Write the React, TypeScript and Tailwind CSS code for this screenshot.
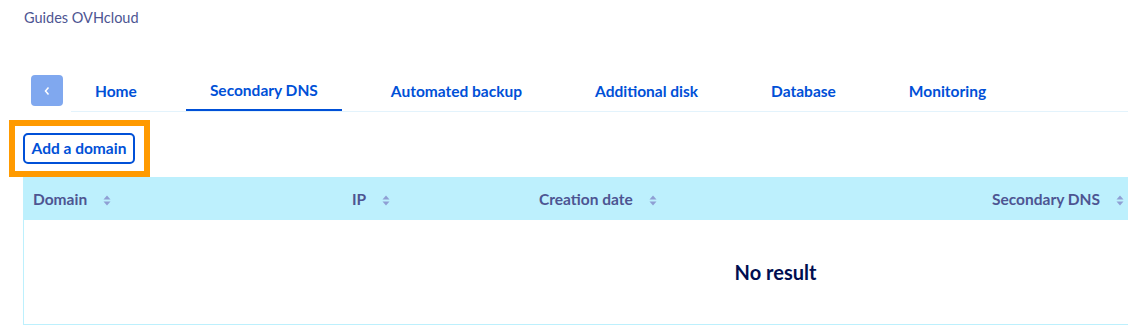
import React from "react";

const tabs = ["Home", "Secondary DNS", "Automated backup", "Additional disk", "Database", "Monitoring"];

function SortIcon() {
  return (
    <svg width="8" height="11" viewBox="0 0 8 11" className="shrink-0">
      <path d="M4 0.5 L7.5 4.5 L0.5 4.5 Z" fill="#8f9fd4" />
      <path d="M4 10.5 L7.5 6.5 L0.5 6.5 Z" fill="#8f9fd4" />
    </svg>
  );
}

export default function App() {
  return (
    <div
      className="w-[1128px] h-[328px] overflow-hidden bg-white"
      style={{ fontFamily: "Lato, 'Noto Sans', sans-serif" }}
    >
      <div className="pl-[24px] pt-[9px] text-[14.5px] leading-[18px] text-[#4d5592]">Guides OVHcloud</div>

      <div className="flex items-end mt-[48px] pl-[31px]">
        <div className="w-[32px] h-[31px] mb-[6px] rounded-[4px] bg-[#80a8ef] flex items-center justify-center">
          <svg width="8" height="10" viewBox="0 0 8 10">
            <path d="M5.5 1.5 L2.5 5 L5.5 8.5" stroke="white" strokeWidth="1.5" fill="none" />
          </svg>
        </div>
        <div className="ml-[8px] flex-1 flex gap-[25px] border-b border-[#e3f3fc] h-[37px]">
          {tabs.map((t) => (
            <div
              key={t}
              className={
                "px-[24px] flex items-center text-[15.5px] font-bold text-[#0050d7] pb-[2px] " +
                (t === "Secondary DNS" ? "border-b-[2px] border-[#0050d7] pb-0" : "")
              }
            >
              {t}
            </div>
          ))}
        </div>
      </div>

      <div className="mt-[8px] ml-[9px] w-[141px] h-[57px] border-[6px] border-[#ff9a00] pl-[8px] pt-[7px]">
        <button className="h-[31px] w-[112px] rounded-[5px] border-[2px] border-[#0050d7] text-[15.5px] font-bold text-[#0050d7] flex items-center justify-center">
          Add a domain
        </button>
      </div>

      <div className="ml-[23px] w-[1505px] border border-t-0 border-[#bdf0fd]">
        <div className="flex h-[43px] bg-[#bdf0fd] items-center pt-[3px] text-[15.5px] font-bold text-[#4d5592]">
          <div className="w-[319px] pl-[9px] flex items-center gap-[16px]">
            Domain <SortIcon />
          </div>
          <div className="w-[187px] pl-[9px] flex items-center gap-[16px]">
            IP <SortIcon />
          </div>
          <div className="w-[453px] pl-[9px] flex items-center gap-[16px]">
            Creation date <SortIcon />
          </div>
          <div className="flex-1 pl-[9px] flex items-center gap-[16px]">
            Secondary DNS <SortIcon />
          </div>
        </div>
        <div className="h-[104px] flex items-center justify-center text-[20px] font-bold text-[#000e50]">
          No result
        </div>
      </div>
    </div>
  );
}
